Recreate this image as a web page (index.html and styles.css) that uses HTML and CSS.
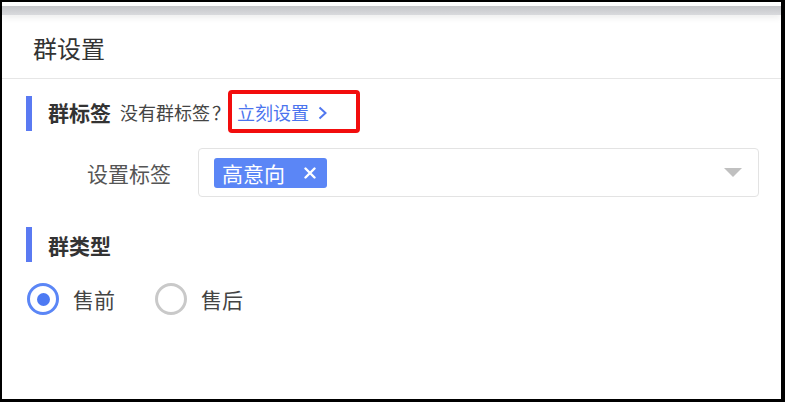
FILE: index.html
```html
<!DOCTYPE html>
<html lang="zh-CN">
<head>
<meta charset="utf-8">
<title>群设置</title>
<link rel="stylesheet" href="styles.css">
</head>
<body>
<div class="frame">
  <div class="topbar"></div>
  <div class="header"><span class="title">群设置</span></div>
  <div class="section-head">
    <span class="bar bar-offset"></span>
    <span class="section-title">群标签</span>
    <span class="hint">没有群标签<span class="qmark">？</span></span>
    <span class="highlight">
      <span class="link">立刻设置</span>
      <svg class="chev" width="11" height="14" viewBox="0 0 11 14"><path d="M2.5 1.5 L8.5 7 L2.5 12.5" fill="none" stroke="#5177ef" stroke-width="2"/></svg>
    </span>
  </div>
  <div class="form-row">
    <span class="label">设置标签</span>
    <div class="select">
      <span class="tag">高意向
        <svg class="tag-close" width="12" height="12" viewBox="0 0 12 12"><path d="M1.5 1.5 L10.5 10.5 M10.5 1.5 L1.5 10.5" stroke="#fff" stroke-width="2.4" stroke-linecap="round"/></svg>
      </span>
      <span class="caret"></span>
    </div>
  </div>
  <div class="section-head section-two">
    <span class="bar"></span>
    <span class="section-title">群类型</span>
  </div>
  <div class="radios">
    <label class="radio"><span class="circle checked"><span class="dot"></span></span><span class="radio-text">售前</span></label>
    <label class="radio"><span class="circle"></span><span class="radio-text">售后</span></label>
  </div>
</div>
</body>
</html>
```

FILE: styles.css
```css
* { box-sizing: border-box; }
html, body { margin: 0; padding: 0; background: #fff; }
body { font-family: "Noto Sans CJK SC", "Noto Sans", sans-serif; color: #333; }

.frame {
  width: 785px;
  height: 402px;
  border-style: solid;
  border-color: #000;
  border-width: 2px 4px 3px 2px;
  background: #fff;
  overflow: hidden;
}

.topbar {
  height: 9px;
  margin-top: 4px;
  background: linear-gradient(#c4c5c9, #d9dadd);
  box-shadow: 0 3px 6px rgba(0, 0, 0, 0.07);
}

.header {
  height: 64px;
  display: flex;
  align-items: center;
  padding: 3px 0 0 31px;
  border-bottom: 1px solid #e6e6e6;
}
.title { font-size: 24px; line-height: 30px; color: #333; }

.section-head {
  display: flex;
  align-items: center;
  margin-top: 11px;
  padding-left: 24px;
  height: 43px;
}
.bar {
  width: 6px;
  height: 35px;
  background: #5a7af2;
  margin-right: 16px;
  flex: none;
}
.bar-offset { margin-top: 4px; }
.section-title { font-size: 21px; font-weight: bold; color: #333; line-height: 28px; }
.hint { font-size: 18px; color: #444; margin-left: 9px; line-height: 24px; }
.qmark { margin-left: 2px; }

.highlight {
  display: flex;
  align-items: center;
  height: 43px;
  width: 132px;
  margin-left: -2px;
  border: 4px solid #f20d0d;
  border-radius: 4px;
  padding-left: 5px;
}
.link { font-size: 18px; color: #4b74ee; line-height: 24px; }
.chev { margin-left: 8px; margin-top: 2px; }

.form-row {
  display: flex;
  align-items: center;
  margin-top: 15px;
  padding-left: 85px;
  padding-right: 22px;
}
.label { font-size: 21px; color: #555; width: 84px; margin-right: 27px; line-height: 28px; }
.select {
  flex: 1;
  height: 49px;
  border: 1px solid #e3e3e3;
  border-radius: 4px;
  display: flex;
  align-items: center;
  padding: 0 16px 0 15px;
}
.tag {
  display: flex;
  align-items: center;
  height: 30px;
  padding: 0 11px 0 8px;
  background: #5b86f6;
  border-radius: 3px;
  color: #fff;
  font-size: 21px;
  line-height: 28px;
}
.tag-close { margin-left: 19px; }
.caret {
  margin-left: auto;
  width: 0;
  height: 0;
  border-left: 9.5px solid transparent;
  border-right: 9.5px solid transparent;
  border-top: 9px solid #c0c0c0;
}

.section-two { margin-top: 26px; }

.radios {
  display: flex;
  align-items: center;
  margin-top: 17px;
  padding-left: 25px;
}
.radio { display: flex; align-items: center; margin-right: 40px; }
.circle {
  width: 32px;
  height: 32px;
  border-radius: 50%;
  border: 3px solid #c9c9c9;
  display: flex;
  align-items: center;
  justify-content: center;
  flex: none;
}
.circle.checked { border-color: #5b86f6; }
.dot { width: 13px; height: 13px; border-radius: 50%; background: #4d7af3; }
.radio-text { font-size: 21px; color: #444; margin-left: 14px; line-height: 28px; }
```
